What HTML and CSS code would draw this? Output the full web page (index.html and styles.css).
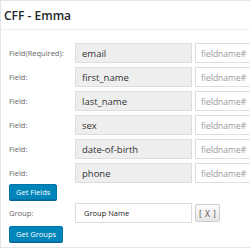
FILE: index.html
```html
<!DOCTYPE html>
<html lang="en">
<head>
    <meta charset="UTF-8">
    <title>CFF - Emma</title>
    <link rel="stylesheet" href="styles.css">
</head>
<body>
<div class="postbox">
    <h2 class="hndle">CFF - Emma</h2>
    <div class="inside">
        <div class="fields">
            <div class="field-row">
                <label class="field-label">Field(Required):</label>
                <input class="field-name" type="text" value="email" readonly>
                <input class="field-map" type="text" placeholder="fieldname#">
            </div>
            <div class="field-row">
                <label class="field-label">Field:</label>
                <input class="field-name" type="text" value="first_name" readonly>
                <input class="field-map" type="text" placeholder="fieldname#">
            </div>
            <div class="field-row">
                <label class="field-label">Field:</label>
                <input class="field-name" type="text" value="last_name" readonly>
                <input class="field-map" type="text" placeholder="fieldname#">
            </div>
            <div class="field-row">
                <label class="field-label">Field:</label>
                <input class="field-name" type="text" value="sex" readonly>
                <input class="field-map" type="text" placeholder="fieldname#">
            </div>
            <div class="field-row">
                <label class="field-label">Field:</label>
                <input class="field-name" type="text" value="date-of-birth" readonly>
                <input class="field-map" type="text" placeholder="fieldname#">
            </div>
            <div class="field-row">
                <label class="field-label">Field:</label>
                <input class="field-name" type="text" value="phone" readonly>
                <input class="field-map" type="text" placeholder="fieldname#">
            </div>
        </div>
        <button class="button-primary" type="button">Get Fields</button>
        <div class="group-row">
            <label class="field-label">Group:</label>
            <input class="group-name" type="text" value="Group Name">
            <button class="button-clear" type="button">[ X ]</button>
        </div>
        <button class="button-primary" type="button">Get Groups</button>
    </div>
</div>
</body>
</html>
```

FILE: styles.css
```css
body {
    margin: 0;
    background: #fff;
    font-family: "Open Sans", sans-serif;
}

.postbox {
    height: 248px;
    border: 1px solid #e5e5e5;
    border-right: none;
    box-sizing: border-box;
    background: #fff;
    overflow: hidden;
}

.hndle {
    margin: 0;
    height: 28px;
    padding: 0 3px;
    font-size: 12px;
    font-weight: 600;
    line-height: 29px;
    color: #23282d;
    border-bottom: 1px solid #eee;
}

.inside {
    padding: 13px 0 0 8px;
}

.fields {
    display: flex;
    flex-direction: column;
    gap: 4px;
}

.field-row {
    display: flex;
    align-items: center;
}

.field-label {
    width: 66px;
    flex-shrink: 0;
    font-size: 7.5px;
    color: #666;
}

.field-name,
.field-map,
.group-name {
    height: 20px;
    box-sizing: border-box;
    margin: 0;
    padding: 0 6px;
    font-family: "Open Sans", sans-serif;
    font-size: 9.5px;
    color: #333;
    border: 1px solid #ddd;
    outline: none;
}

.field-name {
    width: 117px;
    flex-shrink: 0;
    background: #eee;
}

.field-map {
    flex: 1;
    min-width: 0;
    margin: 0 -4px 0 3px;
    padding: 0 5px;
    font-size: 8.5px;
    background: #fff;
}

.field-map::placeholder {
    color: #999;
}

.button-primary {
    display: block;
    height: 16px;
    padding: 0 6px;
    margin: 1px 0 0;
    font-family: "Open Sans", sans-serif;
    font-size: 7.5px;
    color: #fff;
    background: #0085ba;
    border: 1px solid #0073aa;
    border-radius: 2px;
    box-shadow: 0 1px 0 #006799;
}

.group-row {
    display: flex;
    align-items: center;
    margin: 3px 0;
}

.group-name {
    width: 117px;
    padding: 0 8px;
    font-size: 7.5px;
    color: #222;
}

.button-clear {
    height: 18px;
    margin: 0 0 0 3px;
    padding: 0 3px;
    font-family: "Open Sans", sans-serif;
    font-size: 8.5px;
    letter-spacing: 0.5px;
    color: #555;
    background: linear-gradient(#fdfdfd, #e6e6e6);
    border: 1px solid #ccc;
    border-radius: 2px;
}
```
